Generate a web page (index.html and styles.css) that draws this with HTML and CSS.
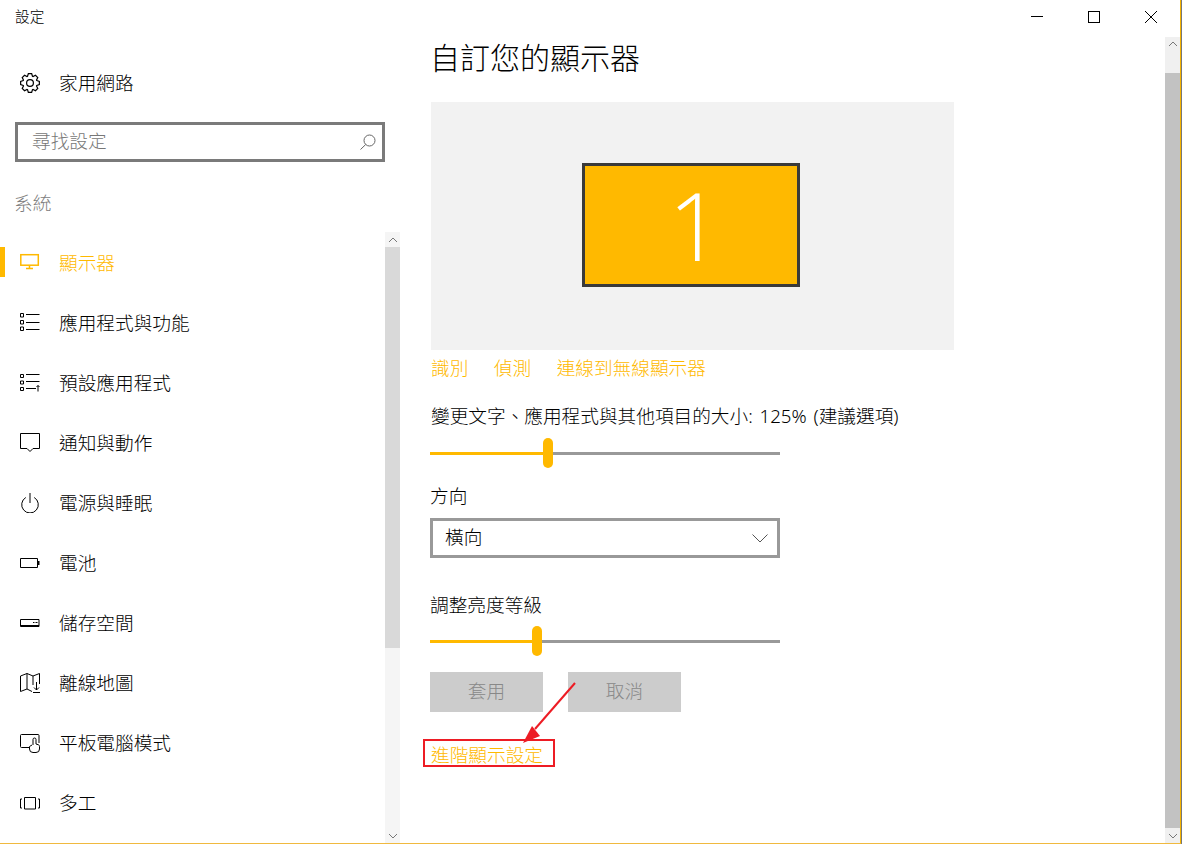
FILE: index.html
```html
<!DOCTYPE html>
<html lang="zh-Hant">
<head>
<meta charset="utf-8">
<title>設定</title>
<link rel="stylesheet" href="styles.css">
</head>
<body>
<div class="window">
  <aside class="sidebar">
    <div class="app-title">設定</div>
    <div class="home-row">
      <svg class="icon icon-gear" viewBox="-10 -10 20 20"><polygon points="6.77,-2.46 9.36,-1.65 9.36,1.65 6.77,2.46 6.53,3.04 7.78,5.45 5.45,7.78 3.04,6.53 2.46,6.77 1.65,9.36 -1.65,9.36 -2.46,6.77 -3.04,6.53 -5.45,7.78 -7.78,5.45 -6.53,3.04 -6.77,2.46 -9.36,1.65 -9.36,-1.65 -6.77,-2.46 -6.53,-3.04 -7.78,-5.45 -5.45,-7.78 -3.04,-6.53 -2.46,-6.77 -1.65,-9.36 1.65,-9.36 2.46,-6.77 3.04,-6.53 5.45,-7.78 7.78,-5.45 6.53,-3.04"/><circle r="3.4"/></svg>
      <span class="row-text">家用網路</span>
    </div>
    <div class="search">
      <span class="search-text">尋找設定</span>
      <svg class="search-icon" viewBox="0 0 16 16"><circle cx="9.500" cy="6.500" r="5.500"/><path d="M5.700 10.500 .5 15.500"/></svg>
    </div>
    <div class="section-label">系統</div>
    <div class="nav-wrap">
      <nav class="nav">
        <div class="nav-item active">
          <svg class="icon icon-display" viewBox="0 0 20 20"><rect x=".8" y="1.700" width="17.500" height="10.500"/><path d="M9.500 12.500v3M6 15.500h7"/></svg>
          <span class="row-text">顯示器</span>
        </div>
        <div class="nav-item">
          <svg class="icon" viewBox="0 0 20 20"><path d="M.5 .5h3v3.500h-3zM.5 7.500h3v3.500h-3zM.5 14h3v3.500h-3zM6 1.500h13.500M6 9.500h13.500M6 16.500h13.500"/></svg>
          <span class="row-text">應用程式與功能</span>
        </div>
        <div class="nav-item">
          <svg class="icon" viewBox="0 0 20 20"><path d="M.5 1.500h3v3h-3zM.5 8h3v3h-3zM.5 14.500h3v3h-3zM6 1.500h13.500M6 8.500h13.500M6 15.500h10M18 18.500v-6M16.500 14l1.500-1.500 1.500 1.500"/></svg>
          <span class="row-text">預設應用程式</span>
        </div>
        <div class="nav-item">
          <svg class="icon" viewBox="0 0 20 20"><path d="M.5 .5h19v15h-6.500l-3 3-3-3h-6.500z"/></svg>
          <span class="row-text">通知與動作</span>
        </div>
        <div class="nav-item">
          <svg class="icon" viewBox="0 0 20 20"><path d="M5.800 4.500a8.300 8.300 0 1 0 8.400 0M10 0v10"/></svg>
          <span class="row-text">電源與睡眠</span>
        </div>
        <div class="nav-item">
          <svg class="icon" viewBox="0 0 20 20"><path d="M.5 5.500h17v9h-17z"/><rect class="nub" x="18" y="8" width="1.500" height="4"/></svg>
          <span class="row-text">電池</span>
        </div>
        <div class="nav-item">
          <svg class="icon" viewBox="0 0 20 20"><path d="M.5 6.500h18.500v7h-18.500zM13 9.500h1.500M15.500 9.500h2M.5 12.500h18.500"/></svg>
          <span class="row-text">儲存空間</span>
        </div>
        <div class="nav-item">
          <svg class="icon" viewBox="0 0 20 20"><path d="M.5 3 7 .5 13 3 19.500 .5V11M.5 3v15.500L7 16l5 2.500M7 .5V16M13 3v9M16.500 9v8M14 14.500l2.500 2.500 2.500-2.500M13 19.500h7"/></svg>
          <span class="row-text">離線地圖</span>
        </div>
        <div class="nav-item">
          <svg class="icon" viewBox="0 0 20 20"><path d="M9 14.500H1.500a1 1 0 0 1-1-1V2.500a1 1 0 0 1 1-1H18a1 1 0 0 1 1 1V10M13 12V6.500a1.500 1.500 0 0 1 3 0V11l2.500 .8c.7 .3 1 .8 1 1.700v2.500a3.500 3.500 0 0 1-3.500 3.500h-3a3.500 3.500 0 0 1-3.500-3.500v-2.500l2.500-1.500"/></svg>
          <span class="row-text">平板電腦模式</span>
        </div>
        <div class="nav-item">
          <svg class="icon" viewBox="0 0 20 20"><path d="M4.500 4.500h11v11.500h-11zM2 6H.5v9H2M18 6h1.500v9H18"/></svg>
          <span class="row-text">多工</span>
        </div>
      </nav>
      <div class="scrollbar scrollbar-left">
        <div class="sb-btn"><svg viewBox="0 0 10 6"><path d="M1 5 5 1l4 4"/></svg></div>
        <div class="sb-thumb"></div>
        <div class="sb-rest"></div>
        <div class="sb-btn"><svg viewBox="0 0 10 6"><path d="M1 1l4 4 4-4"/></svg></div>
      </div>
    </div>
  </aside>

  <div class="pane">
    <div class="controls">
      <svg class="ctl" viewBox="0 0 12 12"><path d="M0 5.500h12"/></svg>
      <svg class="ctl" viewBox="0 0 12 12"><rect x=".5" y=".5" width="11" height="11"/></svg>
      <svg class="ctl" viewBox="0 0 12 12"><path d="M0 0l12 12M12 0 0 12"/></svg>
    </div>
    <div class="pane-body">
      <main class="content">
        <h1 class="page-title">自訂您的顯示器</h1>
        <div class="preview">
          <div class="monitor">1</div>
        </div>
        <div class="links">
          <a class="link">識別</a>
          <a class="link">偵測</a>
          <a class="link">連線到無線顯示器</a>
        </div>
        <div class="label label-scale">變更文字、應用程式與其他項目的大小: 125% (建議選項)</div>
        <div class="slider">
          <div class="fill" style="width:113px"></div>
          <div class="thumb"></div>
          <div class="rest"></div>
        </div>
        <div class="label label-orient">方向</div>
        <div class="select">
          <span class="select-text">橫向</span>
          <svg class="chev" viewBox="0 0 16 9"><path d="M.5 .5 8 8l7.500-7.500"/></svg>
        </div>
        <div class="label label-bright">調整亮度等級</div>
        <div class="slider slider-bright">
          <div class="fill" style="width:102px"></div>
          <div class="thumb"></div>
          <div class="rest"></div>
        </div>
        <div class="buttons">
          <div class="btn">套用</div>
          <div class="btn">取消</div>
        </div>
        <a class="advanced">進階顯示設定</a>
        <svg class="arrow" viewBox="0 0 70 70"><path class="arrow-line" d="M60 1 20 47"/><polygon class="arrow-head" points="8,61 17,44 25,54"/></svg>
      </main>
      <div class="scrollbar scrollbar-right">
        <div class="sb-btn sb-btn-top"><svg viewBox="0 0 10 6"><path d="M1 5 5 1l4 4"/></svg></div>
        <div class="sb-thumb"></div>
        <div class="sb-btn"><svg viewBox="0 0 10 6"><path d="M1 1l4 4 4-4"/></svg></div>
      </div>
    </div>
  </div>
</div>
</body>
</html>
```
FILE: styles.css
```css
* { box-sizing: border-box; }
html, body { margin: 0; padding: 0; background: #777; }
body {
  font-family: "Noto Sans", "Noto Sans CJK TC", sans-serif;
  font-size: 18.67px;
  font-weight: 300;
  color: #000;
  overflow: hidden;
}
svg { display: block; fill: none; stroke: currentColor; stroke-width: 1; }
.window {
  width: 1181px;
  height: 844px;
  display: flex;
  background: #fff;
  border-right: 1px solid #f5b400;
  border-bottom: 1px solid #f0b93f;
  overflow: hidden;
}
.sidebar { width: 400px; flex: none; display: flex; flex-direction: column; }
.app-title { font-size: 14.67px; line-height: 20px; padding: 6px 0 0 15px; height: 63px; }
.home-row { height: 40px; display: flex; align-items: center; gap: 19px; padding-left: 20px; }
.row-text { margin-bottom: 4px; }
.icon { width: 20px; height: 20px; flex: none; }
.icon-gear { stroke-width: 1.200; }
.icon-display { stroke-width: 1.500; }
.nub { fill: currentColor; stroke: none; }
.search {
  margin: 19px 15px 0;
  height: 40px;
  border: 3px solid #7a7a7a;
  display: flex;
  align-items: center;
  justify-content: space-between;
  padding: 0 6px 0 14px;
  color: #777;
}
.search-text { margin-bottom: 6px; }
.search-icon { width: 16px; height: 16px; color: #666; }
.section-label { color: #7d7d7d; line-height: 24px; padding: 29px 0 0 14px; height: 70px; }
.nav-wrap { flex: 1; min-height: 0; display: flex; }
.nav { flex: 1; padding-top: 1px; }
.nav-item { height: 60px; display: flex; align-items: center; gap: 19px; padding-left: 20px; position: relative; }
.nav-item.active { color: #ffb900; }
.nav-item.active::before {
  content: "";
  position: absolute;
  left: 0;
  top: 14px;
  width: 5px;
  height: 30px;
  background: #ffb900;
}
.scrollbar { width: 15px; flex: none; display: flex; flex-direction: column; background: #f5f5f5; color: #777; }
.sb-btn { height: 15px; flex: none; display: flex; align-items: center; justify-content: center; }
.sb-btn svg { width: 10px; height: 6px; }
.sb-thumb { background: #d9d9d9; }
.scrollbar-left .sb-thumb { height: 401px; flex: none; }
.sb-rest { flex: 1; }
.pane { flex: 1; min-width: 0; display: flex; flex-direction: column; }
.controls { height: 37px; flex: none; display: flex; justify-content: flex-end; align-items: flex-start; gap: 45px; padding: 11px 23px 0 0; color: #000; }
.ctl { width: 12px; height: 12px; }
.pane-body { flex: 1; min-height: 0; display: flex; }
.content { flex: 1; position: relative; padding: 0 0 0 30px; min-width: 0; }
.scrollbar-right { background: #f0f0f0; }
.scrollbar-right .sb-thumb { flex: 1; background: #c2c2c2; }
.scrollbar-right .sb-btn-top { height: 36px; align-items: flex-start; padding-top: 4px; }
.page-title { margin: 0; font-size: 30px; font-weight: 300; line-height: 42px; height: 65px; }
.preview {
  width: 523px;
  height: 248px;
  margin-left: 1px;
  background: #f2f2f2;
  display: flex;
  justify-content: center;
}
.monitor {
  width: 218px;
  height: 124px;
  margin-top: 61px;
  margin-right: 3px;
  padding-left: 8px;
  border: 3px solid #3a3a3a;
  background: #ffb900;
  color: #fff;
  font-family: "Open Sans", sans-serif;
  font-weight: 300;
  font-size: 94px;
  line-height: 118px;
  text-align: center;
}
.links { display: flex; gap: 25.500px; height: 36px; line-height: 36px; margin-left: 1px; }
.link { color: #ffb900; }
.label { line-height: 28px; }
.label-scale { margin: 16px 0 0 1px; height: 28px; word-spacing: 2px; }
.slider { width: 350px; height: 30px; display: flex; align-items: center; margin-top: 8px; }
.fill { height: 3px; background: #ffb900; flex: none; }
.thumb { width: 10px; height: 30px; border-radius: 5px; background: #ffb900; flex: none; }
.rest { flex: 1; height: 3px; background: #999; }
.label-orient { margin-top: 14px; }
.select {
  width: 350px;
  height: 40px;
  margin-top: 8px;
  border: 3px solid #999;
  display: flex;
  align-items: center;
  justify-content: space-between;
  padding: 0 9px 0 12px;
}
.select-text { margin-bottom: 6px; }
.chev { width: 16px; height: 9px; color: #555; }
.label-bright { margin-top: 33px; }
.slider-bright { margin-top: 7px; }
.buttons { display: flex; gap: 25px; margin-top: 16px; }
.btn { width: 113px; height: 40px; padding-bottom: 6px; background: #ccc; color: #888; display: flex; align-items: center; justify-content: center; }
.advanced {
  display: inline-block;
  margin: 27px 0 0 -7px;
  padding: 0 10px 0 6px;
  height: 28px;
  line-height: 27px;
  border: 2px solid #ed1c24;
  color: #ffb900;
  white-space: nowrap;
}
.arrow { position: absolute; left: 115px; top: 645px; width: 70px; height: 70px; }
.arrow-line { stroke: #ed1c24; stroke-width: 2; }
.arrow-head { fill: #ed1c24; stroke: none; }
```
